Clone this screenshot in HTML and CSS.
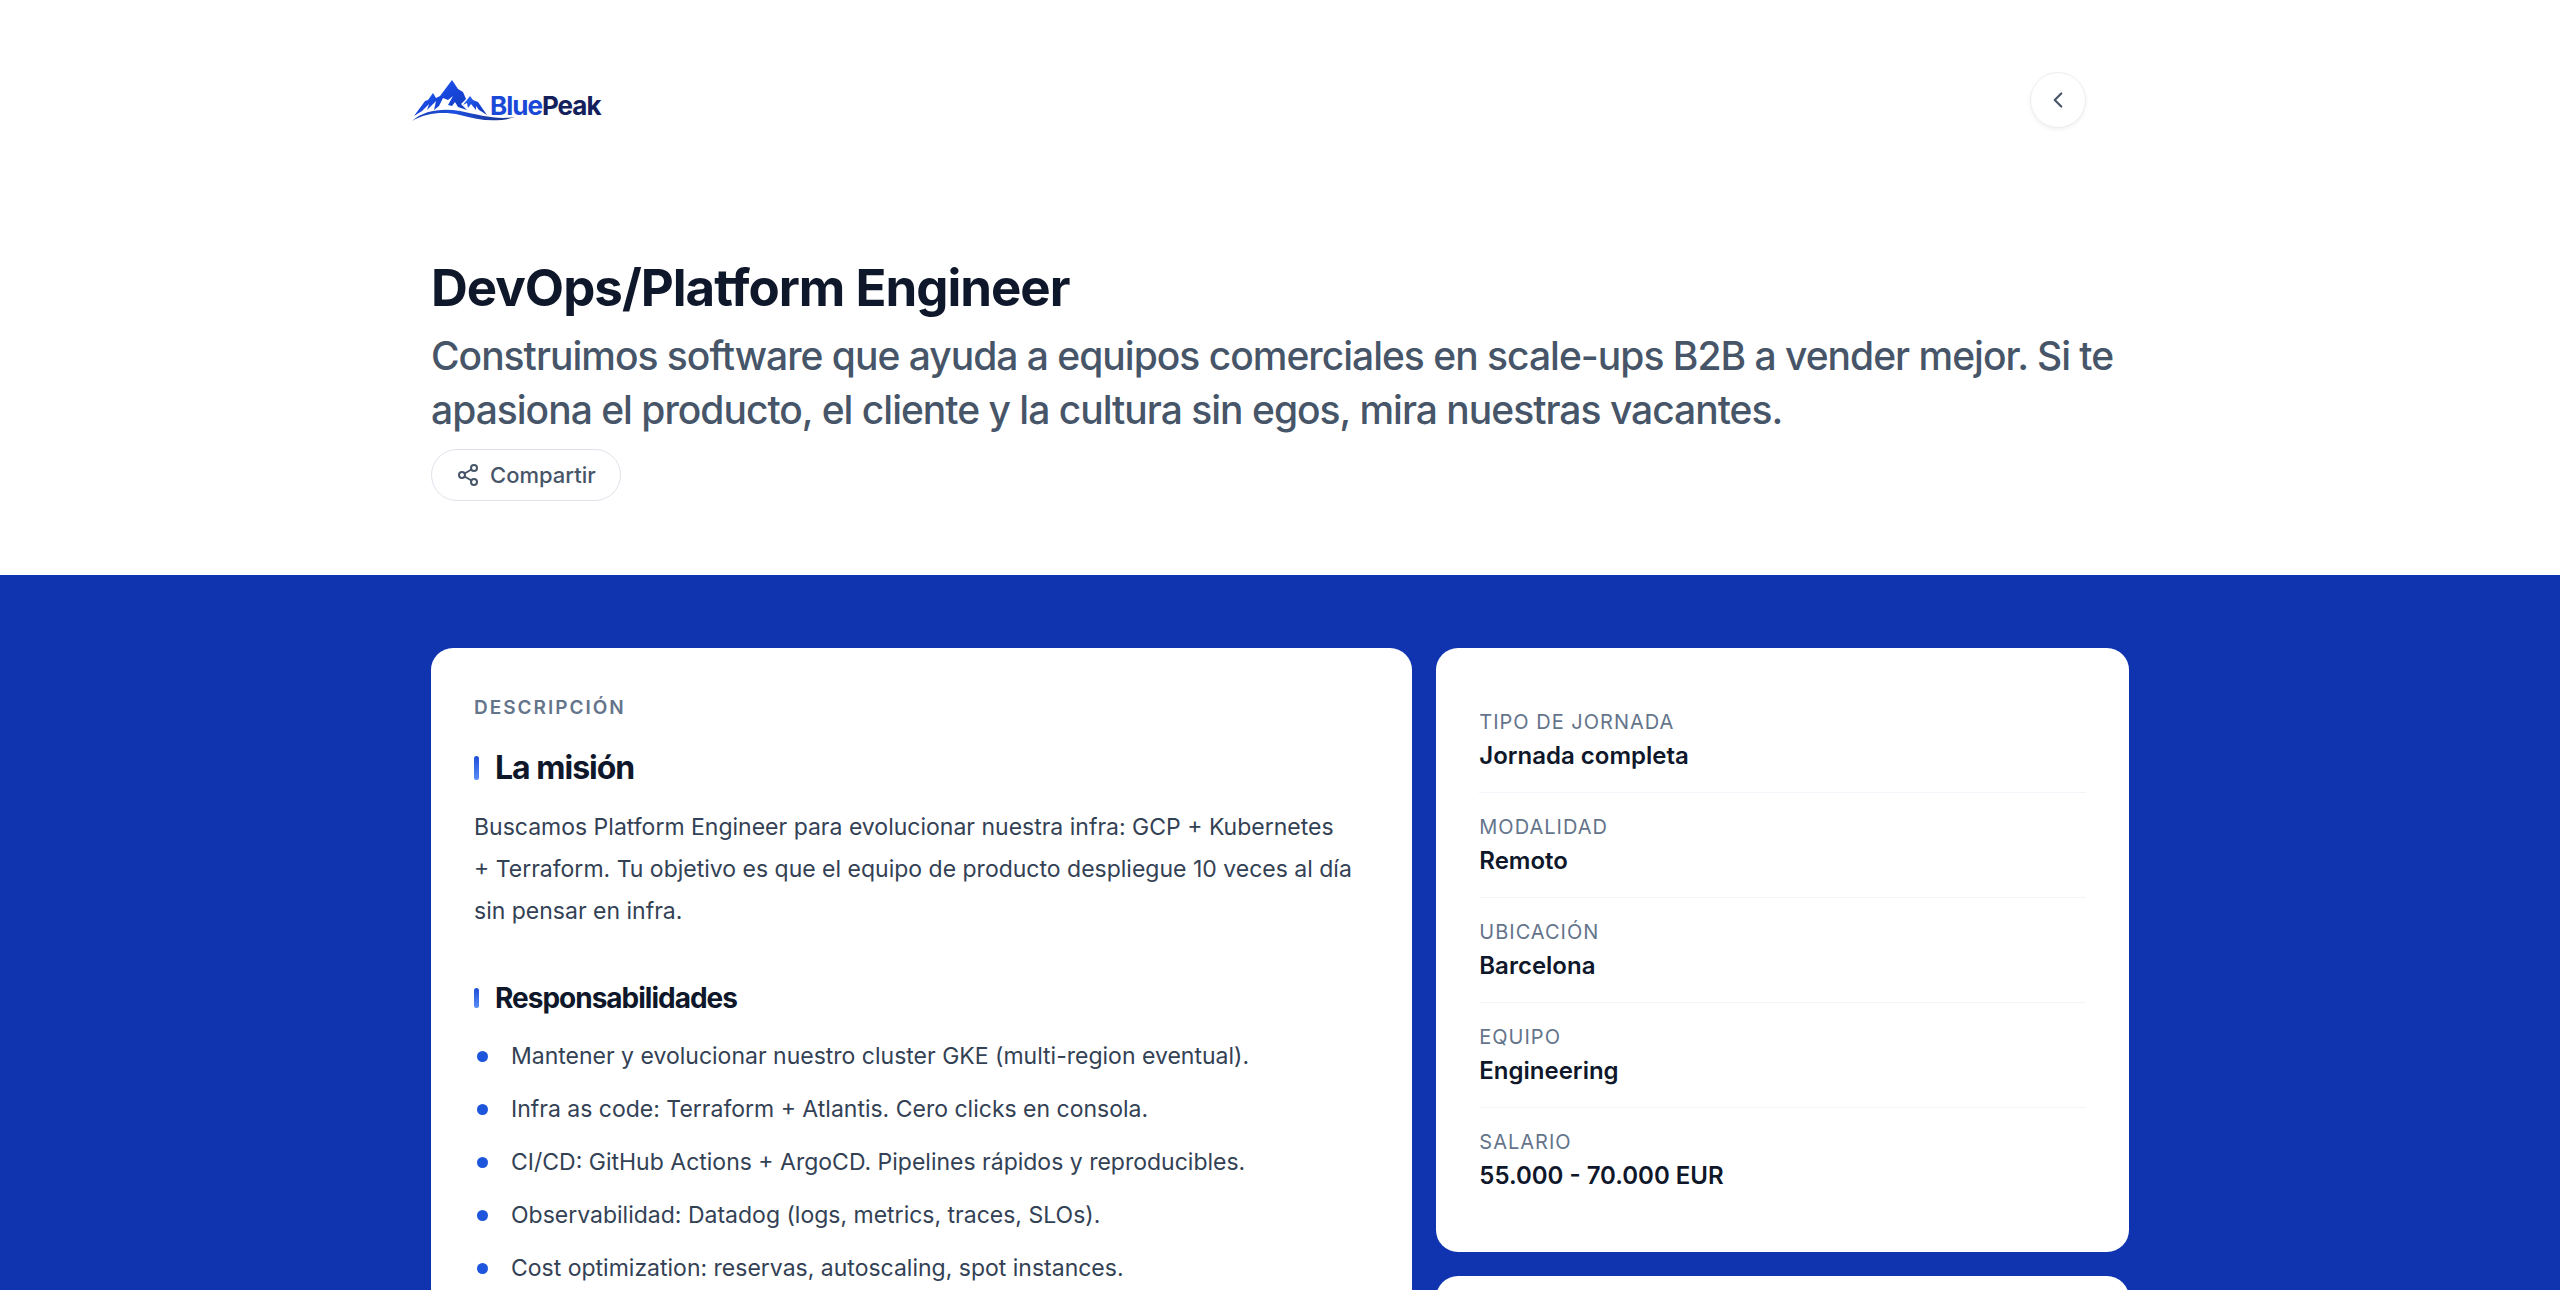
FILE: index.html
```html
<!DOCTYPE html>
<html lang="es">
<head>
<meta charset="UTF-8">
<meta name="viewport" content="width=device-width, initial-scale=1.0">
<title>DevOps/Platform Engineer | BluePeak</title>
<link rel="stylesheet" href="styles.css">
</head>
<body>

<header class="site-header">
    <a href="#" class="logo">
        <svg class="logo-mark" viewBox="0 0 104 42" aria-hidden="true">
            <defs>
                <linearGradient id="peak" x1="0" y1="0" x2="1" y2="1">
                    <stop offset="0" stop-color="#2f6bf5"/>
                    <stop offset="0.5" stop-color="#1746dc"/>
                    <stop offset="1" stop-color="#123bb8"/>
                </linearGradient>
                <linearGradient id="swoosh" x1="0" y1="0" x2="1" y2="0">
                    <stop offset="0" stop-color="#1a3fae"/>
                    <stop offset="0.4" stop-color="#1d4fe0"/>
                    <stop offset="1" stop-color="#1c2f7c"/>
                </linearGradient>
            </defs>
            <path fill="url(#peak)" d="M2 37 L13 22 L16 21 L21 14 L24 19 L28 17 L40 1 L46 10 L51 13 L54 20 L49 25 L55 31 L46 28 L43 23 L40 27 L36 26 L41 17 L36 21 L31 19 L27 27 L22 31 L24 22 L18 28 L15 31 L17 25 L10 32 Z"/>
            <path fill="url(#peak)" d="M51 26 L58 17 L61 21 L66 23 L75 36 L67 31 L64 27 L64 31 L59 25 L56 29 L55 24 Z"/>
            <path fill="url(#swoosh)" d="M0 42 C12 31 31 29 48 32 C68 36 84 41 103 38 C84 44 66 41 48 36 C31 32 14 34 0 42 Z"/>
        </svg>
        <span class="logo-text">Blue<span class="logo-dark">Peak</span></span>
    </a>
    <button type="button" class="back-btn" aria-label="Volver">
        <svg width="26" height="26" viewBox="0 0 24 24" fill="none" stroke="currentColor" stroke-width="2" stroke-linecap="round" stroke-linejoin="round"><path d="M15 6l-6 6 6 6"/></svg>
    </button>
</header>

<section class="hero">
    <h1>DevOps/Platform Engineer</h1>
    <p class="tagline">Construimos software que ayuda a equipos comerciales en scale-ups B2B a vender mejor. Si te apasiona el producto, el cliente y la cultura sin egos, mira nuestras vacantes.</p>
    <button type="button" class="share-btn">
        <svg width="24" height="24" viewBox="0 0 24 24" fill="none" stroke="currentColor" stroke-width="2" stroke-linecap="round" stroke-linejoin="round"><circle cx="18" cy="5" r="3"/><circle cx="6" cy="12" r="3"/><circle cx="18" cy="19" r="3"/><path d="M8.6 13.5l6.8 4M15.4 6.5l-6.8 4"/></svg>
        Compartir
    </button>
</section>

<main class="job">
    <div class="job-grid">
        <article class="card description">
            <p class="eyebrow">Descripción</p>
            <h2>La misión</h2>
            <p>Buscamos Platform Engineer para evolucionar nuestra infra: GCP + Kubernetes +&nbsp;Terraform. Tu objetivo es que el equipo de producto despliegue 10 veces al día sin pensar en infra.</p>
            <h3>Responsabilidades</h3>
            <ul>
                <li>Mantener y evolucionar nuestro cluster GKE (multi-region eventual).</li>
                <li>Infra as code: Terraform + Atlantis. Cero clicks en consola.</li>
                <li>CI/CD: GitHub Actions + ArgoCD. Pipelines rápidos y reproducibles.</li>
                <li>Observabilidad: Datadog (logs, metrics, traces, SLOs).</li>
                <li>Cost optimization: reservas, autoscaling, spot instances.</li>
            </ul>
        </article>

        <aside class="sidebar">
            <dl class="card facts">
                <div class="fact">
                    <dt>Tipo de jornada</dt>
                    <dd>Jornada completa</dd>
                </div>
                <div class="fact">
                    <dt>Modalidad</dt>
                    <dd>Remoto</dd>
                </div>
                <div class="fact">
                    <dt>Ubicación</dt>
                    <dd>Barcelona</dd>
                </div>
                <div class="fact">
                    <dt>Equipo</dt>
                    <dd>Engineering</dd>
                </div>
                <div class="fact">
                    <dt>Salario</dt>
                    <dd>55.000 - 70.000 EUR</dd>
                </div>
            </dl>
            <div class="card extra"></div>
        </aside>
    </div>
</main>

</body>
</html>
```

FILE: styles.css
```css
* {
    box-sizing: border-box;
}
body {
    font-family: Inter, "Liberation Sans", sans-serif;
    margin: 0;
    min-height: 100vh;
    background-color: #fff;
    color: #0f172a;
    display: flex;
    flex-direction: column;
}
h1, h2, h3, p, ul, dl, dd {
    margin: 0;
    padding: 0;
}
button {
    font-family: inherit;
    background-color: #fff;
    color: #475569;
    cursor: pointer;
}

/* header */
.site-header {
    width: 100%;
    max-width: 1736px;
    margin: 0 auto;
    padding: 72px 62px 0 0;
    display: flex;
    justify-content: space-between;
    align-items: center;
}
.logo {
    display: flex;
    align-items: center;
    text-decoration: none;
}
.logo-mark {
    width: 104px;
    height: 42px;
    margin-right: -26px;
}
.logo-text {
    font-size: 26px;
    font-weight: 700;
    letter-spacing: -1px;
    line-height: 42px;
    padding-top: 12px;
    color: #1a49d8;
}
.logo-dark {
    color: #14205c;
}
.back-btn {
    width: 56px;
    height: 56px;
    display: flex;
    align-items: center;
    justify-content: center;
    padding: 0;
    border: 1px solid #eceef1;
    border-radius: 50%;
    box-shadow: 0 2px 4px rgba(15, 23, 42, 0.06);
}

/* hero */
.hero {
    width: 100%;
    max-width: 1698px;
    margin: 0 auto;
    padding: 124px 0 74px;
}
h1 {
    font-size: 51px;
    font-weight: 700;
    letter-spacing: -1px;
    line-height: 72px;
    margin-bottom: 5px;
}
.tagline {
    font-size: 39px;
    font-weight: 500;
    letter-spacing: -1px;
    line-height: 54px;
    color: #475569;
    margin-bottom: 12px;
}
.share-btn {
    display: flex;
    align-items: center;
    gap: 10px;
    height: 52px;
    padding: 0 24px;
    font-size: 22px;
    font-weight: 500;
    border: 1px solid #dfe4ea;
    border-radius: 26px;
}

/* job */
.job {
    flex-grow: 1;
    background-color: #1034b0;
    padding: 73px 0;
    display: flex;
    justify-content: center;
}
.job-grid {
    width: 100%;
    max-width: 1698px;
    display: grid;
    grid-template-columns: 17fr 12fr;
    gap: 24px;
}
.card {
    background-color: #fff;
    border-radius: 22px;
}
.description {
    padding: 42px 43px;
    color: #334155;
    font-size: 23px;
    line-height: 42px;
}
.eyebrow {
    font-size: 19px;
    font-weight: 600;
    letter-spacing: 2px;
    line-height: 36px;
    text-transform: uppercase;
    color: #64748b;
    margin-bottom: 20px;
}
h2, h3 {
    display: flex;
    align-items: center;
    gap: 16px;
    color: #0f172a;
    font-weight: 700;
    letter-spacing: -1px;
    line-height: 44px;
}
h2 {
    font-size: 32px;
    margin-bottom: 16px;
}
h3 {
    font-size: 28px;
    margin: 44px 0 15px;
}
h2::before, h3::before {
    content: "";
    width: 5px;
    height: 24px;
    border-radius: 3px;
    background: linear-gradient(#1d4ed8, #5b8df8);
}
h3::before {
    height: 20px;
}
ul {
    list-style: none;
    display: grid;
    gap: 11px;
}
li {
    display: flex;
    align-items: center;
    gap: 23px;
}
li::before {
    content: "";
    width: 11px;
    height: 11px;
    margin-left: 3px;
    border-radius: 50%;
    background-color: #1d56dc;
}
.sidebar {
    display: flex;
    flex-direction: column;
    gap: 24px;
}
.extra {
    flex-grow: 1;
    min-height: 120px;
}
.facts {
    padding: 40px 43px;
}
.fact {
    padding: 18px 0;
    border-bottom: 1px solid #f1f5f9;
}
.fact:last-child {
    border-bottom: none;
}
dt {
    font-size: 20px;
    letter-spacing: 1px;
    line-height: 32px;
    text-transform: uppercase;
    color: #64748b;
}
dd {
    font-size: 24px;
    font-weight: 600;
    line-height: 36px;
}
```
